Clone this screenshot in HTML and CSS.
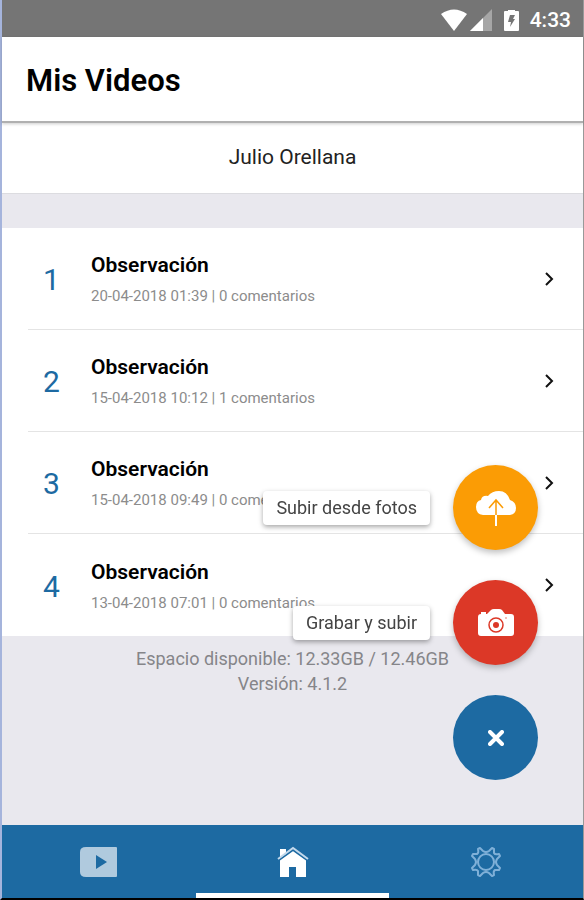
FILE: index.html
```html
<!DOCTYPE html>
<html lang="es">
<head>
<meta charset="UTF-8">
<meta name="viewport" content="width=device-width, initial-scale=1.0">
<title>Mis Videos</title>
<link rel="stylesheet" href="styles.css">
</head>
<body>

<div class="app">
    <div class="status-bar">
        <svg class="wifi" width="28" height="22" viewBox="0 0 28 22"><path d="M1 5Q14-4 27 5L14 22Z" fill="#fff"/></svg>
        <svg class="signal" width="22" height="22" viewBox="0 0 22 22"><path d="M22 0V22H0Z" fill="#a6a6a6"/><path d="M13 9V22H0Z" fill="#fff"/></svg>
        <svg class="battery" width="15" height="22" viewBox="0 0 15 22"><path d="M4 1H11V2H14Q15 2 15 3V21Q15 22 14 22H1Q0 22 0 21V3Q0 2 1 2H4Z" fill="#fff"/><path d="M6 6H11L9 10H11L6 18L7 13H4Z" fill="#757575"/></svg>
        <span class="clock">4:33</span>
    </div>

    <header class="header">
        <h1>Mis Videos</h1>
    </header>

    <main class="content">
        <div class="user-name">Julio Orellana</div>

        <ul class="video-list">
            <li>
                <a class="video" href="#">
                    <span class="number">1</span>
                    <span class="info">
                        <span class="title">Observación</span>
                        <span class="meta">20-04-2018 01:39 | 0 comentarios</span>
                    </span>
                    <svg class="arrow" width="10" height="16" viewBox="0 0 10 16"><path d="M2 2L8 8L2 14"/></svg>
                </a>
            </li>
            <li>
                <a class="video" href="#">
                    <span class="number">2</span>
                    <span class="info">
                        <span class="title">Observación</span>
                        <span class="meta">15-04-2018 10:12 | 1 comentarios</span>
                    </span>
                    <svg class="arrow" width="10" height="16" viewBox="0 0 10 16"><path d="M2 2L8 8L2 14"/></svg>
                </a>
            </li>
            <li>
                <a class="video" href="#">
                    <span class="number">3</span>
                    <span class="info">
                        <span class="title">Observación</span>
                        <span class="meta">15-04-2018 09:49 | 0 comentarios</span>
                    </span>
                    <svg class="arrow" width="10" height="16" viewBox="0 0 10 16"><path d="M2 2L8 8L2 14"/></svg>
                </a>
            </li>
            <li>
                <a class="video" href="#">
                    <span class="number">4</span>
                    <span class="info">
                        <span class="title">Observación</span>
                        <span class="meta">13-04-2018 07:01 | 0 comentarios</span>
                    </span>
                    <svg class="arrow" width="10" height="16" viewBox="0 0 10 16"><path d="M2 2L8 8L2 14"/></svg>
                </a>
            </li>
        </ul>

        <div class="storage">
            <div>Espacio disponible: 12.33GB / 12.46GB</div>
            <div>Versión: 4.1.2</div>
        </div>
    </main>

    <nav class="tabs">
        <a class="tab" href="#" aria-label="Videos">
            <svg width="38" height="32" viewBox="0 0 38 32"><path d="M6 1H36Q37 1 37 2V30Q37 31 36 31H6Q0 31 0 26V6Q0 1 6 1Z" fill="#b0cade"/><path d="M16 9L27 16L16 23Z" fill="#1d6aa2"/></svg>
        </a>
        <a class="tab active" href="#" aria-label="Inicio">
            <svg width="32" height="32" viewBox="0 0 32 32"><path d="M3 3H9V8L16 3L29 13V31H19V21H12V31H3Z" fill="#fff"/><path d="M2 14L16 4L30 14" fill="none" stroke="#1d6aa2" stroke-width="2"/><path d="M1 13L16 2L31 13" fill="none" stroke="#c3d9ec" stroke-width="2"/></svg>
        </a>
        <a class="tab" href="#" aria-label="Ajustes">
            <svg width="32" height="32" viewBox="-16 -16 32 32" fill="none" stroke="#7fb0d8" stroke-width="2" stroke-linejoin="round"><circle r="8"/><path d="M-6-14L-3-11Q0-9 3-11L6-14L8-13V-9Q9-7 13-8L14-6L11-3Q9 0 11 3L14 6L13 8H9Q7 9 8 13L6 14L3 11Q0 9-3 11L-6 14L-8 13V9Q-9 7-13 8L-14 6L-11 3Q-9 0-11-3L-14-6L-13-8H-9Q-7-9-8-13Z"/></svg>
        </a>
    </nav>

    <!-- Floating upload menu -->
    <div class="fab-menu">
        <div class="fab-item">
            <label class="fab-label" for="uploadButton">Subir desde fotos</label>
            <button class="fab upload" id="uploadButton">
                <svg width="42" height="36" viewBox="0 0 42 36"><path d="M8 25Q1 24 1 17Q1 11 6 10Q7 5 13 6Q17 1 24 1Q32 1 35 10Q41 12 41 18Q41 24 35 25Z" fill="#fff"/><path d="M21 25V11M14 18L21 10L28 18" fill="none" stroke="#fb9c05" stroke-width="1.5"/><path d="M21 25V36" stroke="#fff" stroke-width="2"/></svg>
            </button>
        </div>
        <div class="fab-item">
            <label class="fab-label" for="recordButton">Grabar y subir</label>
            <button class="fab record" id="recordButton">
                <svg width="36" height="28" viewBox="0 0 36 28"><path d="M3 5V3H8V5H9L13 1Q14 0 16 0H21Q23 0 24 1L27 5H33Q36 5 36 8V24Q36 27 33 27H3Q0 27 0 24V8Q0 5 3 5Z" fill="#fff"/><circle cx="18" cy="16" r="7" fill="none" stroke="#dc3827" stroke-width="1.5"/><circle cx="18" cy="16" r="3" fill="#dc3827"/><circle cx="28" cy="9" r="1" fill="#f0a8a0"/></svg>
            </button>
        </div>
        <div class="fab-item">
            <button class="fab close" aria-label="Cerrar">
                <svg width="16" height="16" viewBox="0 0 16 16"><path d="M2 2L14 14M14 2L2 14" stroke="#fff" stroke-width="4" stroke-linecap="round"/></svg>
            </button>
        </div>
    </div>
</div>

</body>
</html>
```
FILE: styles.css
```css
* {
    box-sizing: border-box;
}

body {
    margin: 0;
    font-family: Roboto, sans-serif;
    background-color: #e9e8ee;
    color: #000;
}

.app {
    display: flex;
    flex-direction: column;
    min-height: 100vh;
    border-left: 2px solid #a5b4dc;
    border-right: 1px solid #999;
    border-bottom: 2px solid #000;
}

.status-bar {
    display: flex;
    align-items: center;
    justify-content: flex-end;
    height: 37px;
    padding: 2px 12px 0 0;
    background-color: #757575;
}

.signal {
    margin-left: 2px;
}

.battery {
    margin: 0 11px 0 12px;
}

.clock {
    color: #fff;
    font-size: 21px;
    font-weight: 500;
}

.header {
    padding: 24px 24px 20px;
    background-color: #fff;
    border-bottom: 2px solid #b0b0b0;
    box-shadow: 0 1px 3px rgba(0, 0, 0, 0.2);
    z-index: 1;
}

h1 {
    margin: 0;
    font-size: 31px;
    line-height: 40px;
    font-weight: 600;
}

.content {
    flex: 1;
}

.user-name {
    padding: 20px 20px 22px;
    background-color: #fff;
    border-bottom: 1px solid #dcdce0;
    color: #222;
    font-size: 21px;
    line-height: 28px;
    text-align: center;
}

.video-list {
    margin: 34px 0 0;
    padding: 0;
    list-style: none;
    background-color: #fff;
}

.video {
    display: flex;
    align-items: center;
    height: 102px;
    margin-left: 26px;
    padding-right: 29px;
    border-bottom: 1px solid #e4e4e4;
    color: #000;
    text-decoration: none;
}

.video-list li:last-child .video {
    border-bottom: none;
}

.number {
    width: 63px;
    padding: 2px 0 0 15px;
    color: #1d6aa2;
    font-size: 30px;
}

.info {
    flex: 1;
}

.title,
.meta {
    display: block;
}

.title {
    margin-bottom: 7px;
    font-size: 21px;
    line-height: 28px;
    font-weight: 600;
}

.meta {
    color: #8c8c8c;
    font-size: 15px;
    line-height: 20px;
}

.arrow {
    fill: none;
    stroke: #111;
    stroke-width: 2;
}

.storage {
    padding-top: 10px;
    color: #858589;
    font-size: 18px;
    line-height: 25px;
    text-align: center;
}

.tabs {
    display: flex;
    background-color: #1d6aa2;
}

.tab {
    flex: 1;
    display: flex;
    align-items: center;
    justify-content: center;
    height: 73px;
    padding-top: 6px;
    border-bottom: 5px solid transparent;
}

.tab.active {
    border-bottom-color: #fff;
}

.fab-menu {
    position: fixed;
    right: 46px;
    bottom: 120px;
    display: flex;
    flex-direction: column;
    gap: 30px;
    z-index: 2;
}

.fab-item {
    display: flex;
    align-items: center;
    justify-content: flex-end;
    gap: 23px;
}

.fab-label {
    padding: 5px 13px;
    border-radius: 4px;
    background-color: #fff;
    box-shadow: 0 2px 5px rgba(0, 0, 0, 0.35);
    color: #444;
    font-size: 18px;
    line-height: 24px;
}

.fab {
    display: flex;
    align-items: center;
    justify-content: center;
    width: 85px;
    height: 85px;
    padding: 0;
    border: none;
    border-radius: 50%;
    cursor: pointer;
}

.upload,
.record {
    box-shadow: 0 3px 6px rgba(0, 0, 0, 0.25);
}

.upload {
    background-color: #fb9c05;
}

.record {
    background-color: #dc3827;
}

.close {
    background-color: #1d6aa2;
}
```
